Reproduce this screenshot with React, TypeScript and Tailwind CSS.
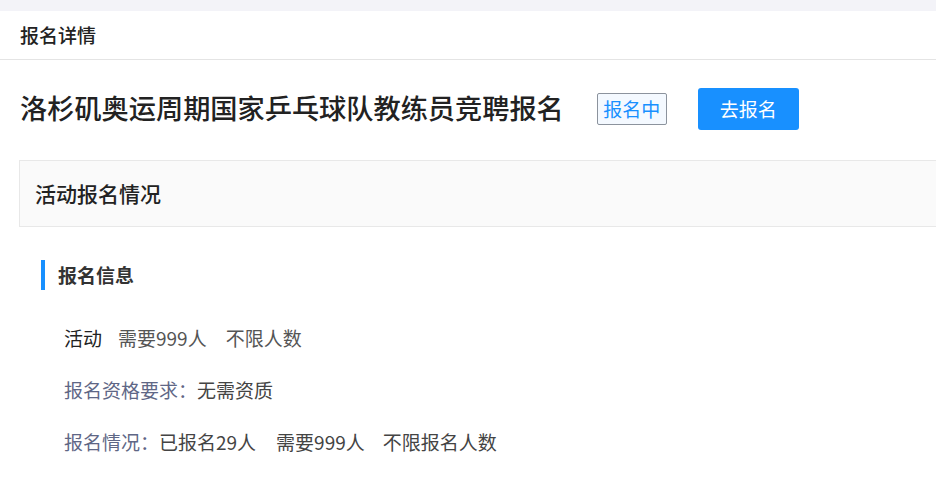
export default function App() {
	return (
		<div
			className="w-[936px] h-[489px] overflow-hidden bg-white text-[#333]"
			style={{ fontFamily: '"Noto Sans CJK SC", "Noto Sans", sans-serif' }}
		>
			<div className="h-[11px] bg-[#f3f3f8]" />
			<div className="h-[49px] border-b border-[#e4e4e4] flex items-center pl-[20px] text-[19px] font-medium text-[#222]">
				报名详情
			</div>

			<div className="flex items-center pl-[20px] pt-[28px] h-[70px]">
				<h1 className="text-[27.2px] font-medium text-[#222] leading-none -mt-[3px]">
					洛杉矶奥运周期国家乒乓球队教练员竞聘报名
				</h1>
				<span className="ml-[33px] h-[32px] w-[70px] flex items-center justify-center border border-[#8c939d] rounded-[2px] bg-[#f4f9ff] text-[#1890ff] text-[19px]">
					报名中
				</span>
				<button className="ml-[31px] w-[101px] h-[42px] rounded-[3px] bg-[#1890ff] text-white text-[19px]">
					去报名
				</button>
			</div>

			<div className="ml-[19px] mt-[30px] h-[67px] border border-r-0 border-[#e8e8e8] bg-[#fafafa] flex items-center pl-[15px] text-[21px] font-medium text-[#222]">
				活动报名情况
			</div>

			<div className="ml-[41px] mt-[33px] flex items-center h-[30px]">
				<div className="w-[4px] h-[30px] bg-[#1890ff]" />
				<span className="ml-[13px] text-[19px] font-bold text-[#333]">报名信息</span>
			</div>

			<div className="ml-[64px] mt-[22px] flex flex-col text-[19px]">
				<div className="h-[52px] flex items-center">
					<span className="text-[#222] mr-[16px]">活动</span>
					<span className="text-[#555] mr-[19px]">需要999人</span>
					<span className="text-[#555]">不限人数</span>
				</div>
				<div className="h-[52px] flex items-center">
					<span className="text-[#5f6786]">报名资格要求：</span>
					<span className="text-[#444]">无需资质</span>
				</div>
				<div className="h-[52px] flex items-center">
					<span className="text-[#5f6786]">报名情况：</span>
					<span className="text-[#444] mr-[20px]">已报名29人</span>
					<span className="text-[#444] mr-[18px]">需要999人</span>
					<span className="text-[#444]">不限报名人数</span>
				</div>
			</div>
		</div>
	);
}
